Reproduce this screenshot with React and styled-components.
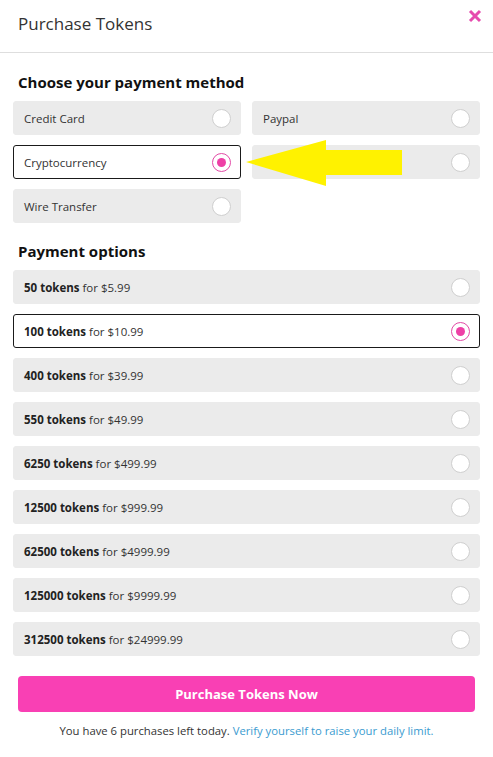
import React, { useState } from "react";
import styled, { createGlobalStyle } from "styled-components";

const Global = createGlobalStyle`
  html, body {
    margin: 0;
    padding: 0;
    background: #ffffff;
  }
  body {
    font-family: "Open Sans", "Noto Sans", sans-serif;
    color: #333333;
  }
  * {
    box-sizing: border-box;
  }
`;

const Modal = styled.div`
  position: relative;
  width: 493px;
  min-height: 757px;
  background: #ffffff;
`;

const Header = styled.div`
  height: 53px;
  padding: 0 18px;
  display: flex;
  align-items: center;
  justify-content: space-between;
  border-bottom: 1px solid #dedede;
`;

const HeaderTitle = styled.div`
  font-size: 17px;
  color: #333333;
  margin-top: -5px;
`;

const Close = styled.button`
  border: 0;
  background: none;
  padding: 0;
  width: 16px;
  height: 16px;
  position: absolute;
  top: 8px;
  right: 10px;
  cursor: pointer;
`;

const Body = styled.div`
  padding: 18px 13px 0;
`;

const SectionTitle = styled.div`
  font-size: 15px;
  font-weight: 700;
  color: #111111;
  line-height: 22px;
  padding: 0 5px;
  margin-top: ${(p) => p.$top || 0}px;
  margin-bottom: 8px;
`;

const Grid = styled.div`
  display: grid;
  grid-template-columns: 1fr 1fr;
  column-gap: 11px;
  row-gap: 10px;
`;

const List = styled.div`
  display: flex;
  flex-direction: column;
  gap: 10px;
`;

const Option = styled.label`
  height: 34px;
  display: flex;
  align-items: center;
  justify-content: space-between;
  padding: 0 9px 0 10px;
  border-radius: 3px;
  border: 1px solid ${(p) => (p.$active ? "#1a1a1a" : "#ebebeb")};
  background: ${(p) => (p.$active ? "#ffffff" : "#ebebeb")};
  font-size: 11.5px;
  color: #333333;
  cursor: pointer;
`;

const Label = styled.span`
  b {
    font-weight: 700;
    color: #222222;
  }
`;

const Radio = styled.span`
  width: 19px;
  height: 19px;
  border-radius: 50%;
  background: #ffffff;
  border: 1px solid ${(p) => (p.$active ? "#e24aa6" : "#cfcfcf")};
  display: flex;
  align-items: center;
  justify-content: center;

  &::after {
    content: "";
    width: 9px;
    height: 9px;
    border-radius: 50%;
    background: #ee3fa6;
    display: ${(p) => (p.$active ? "block" : "none")};
  }
`;

const Button = styled.button`
  display: block;
  width: calc(100% - 10px);
  margin: 20px 5px 0;
  height: 36px;
  border: 0;
  border-radius: 4px;
  background: #f940b4;
  color: #ffffff;
  font-family: "Open Sans", "Noto Sans", sans-serif;
  font-size: 13px;
  font-weight: 700;
  cursor: pointer;
`;

const Footer = styled.p`
  margin: 11px 0 0;
  text-align: center;
  font-size: 11.3px;
  line-height: 16px;
  color: #333333;

  a {
    color: #3a9bd0;
    text-decoration: none;
  }
`;

const Arrow = styled.svg`
  position: absolute;
  left: 244px;
  top: 139px;
  pointer-events: none;
`;

const methods = ["Credit Card", "Paypal", "Cryptocurrency", "", "Wire Transfer"];

const packs = [
  [50, "5.99"],
  [100, "10.99"],
  [400, "39.99"],
  [550, "49.99"],
  [6250, "499.99"],
  [12500, "999.99"],
  [62500, "4999.99"],
  [125000, "9999.99"],
  [312500, "24999.99"],
];

export default function App() {
  const [method, setMethod] = useState(2);
  const [pack, setPack] = useState(1);

  return (
    <Modal>
      <Global />
      <Header>
        <HeaderTitle>Purchase Tokens</HeaderTitle>
      </Header>
      <Close aria-label="close">
        <svg width="16" height="16" viewBox="0 0 16 16">
          <path d="M3 3 L13 13 M13 3 L3 13" stroke="#e64bae" strokeWidth="3" strokeLinecap="butt" />
        </svg>
      </Close>

      <Body>
        <SectionTitle>Choose your payment method</SectionTitle>
        <Grid>
          {methods.map((m, i) => (
            <Option key={i} $active={method === i} onClick={() => setMethod(i)}>
              <Label>{m}</Label>
              <Radio $active={method === i} />
            </Option>
          ))}
        </Grid>

        <SectionTitle $top={17}>Payment options</SectionTitle>
        <List>
          {packs.map(([n, price], i) => (
            <Option key={n} $active={pack === i} onClick={() => setPack(i)}>
              <Label>
                <b>{n} tokens</b> for ${price}
              </Label>
              <Radio $active={pack === i} />
            </Option>
          ))}
        </List>

        <Button>Purchase Tokens Now</Button>
        <Footer>
          You have 6 purchases left today. <a href="#">Verify yourself to raise your daily limit.</a>
        </Footer>
      </Body>

      <Arrow width="160" height="50" viewBox="0 0 160 50">
        <polygon points="2,23 82,1 82,11 158,11 158,36 82,36 82,47" fill="#fff200" />
      </Arrow>
    </Modal>
  );
}
